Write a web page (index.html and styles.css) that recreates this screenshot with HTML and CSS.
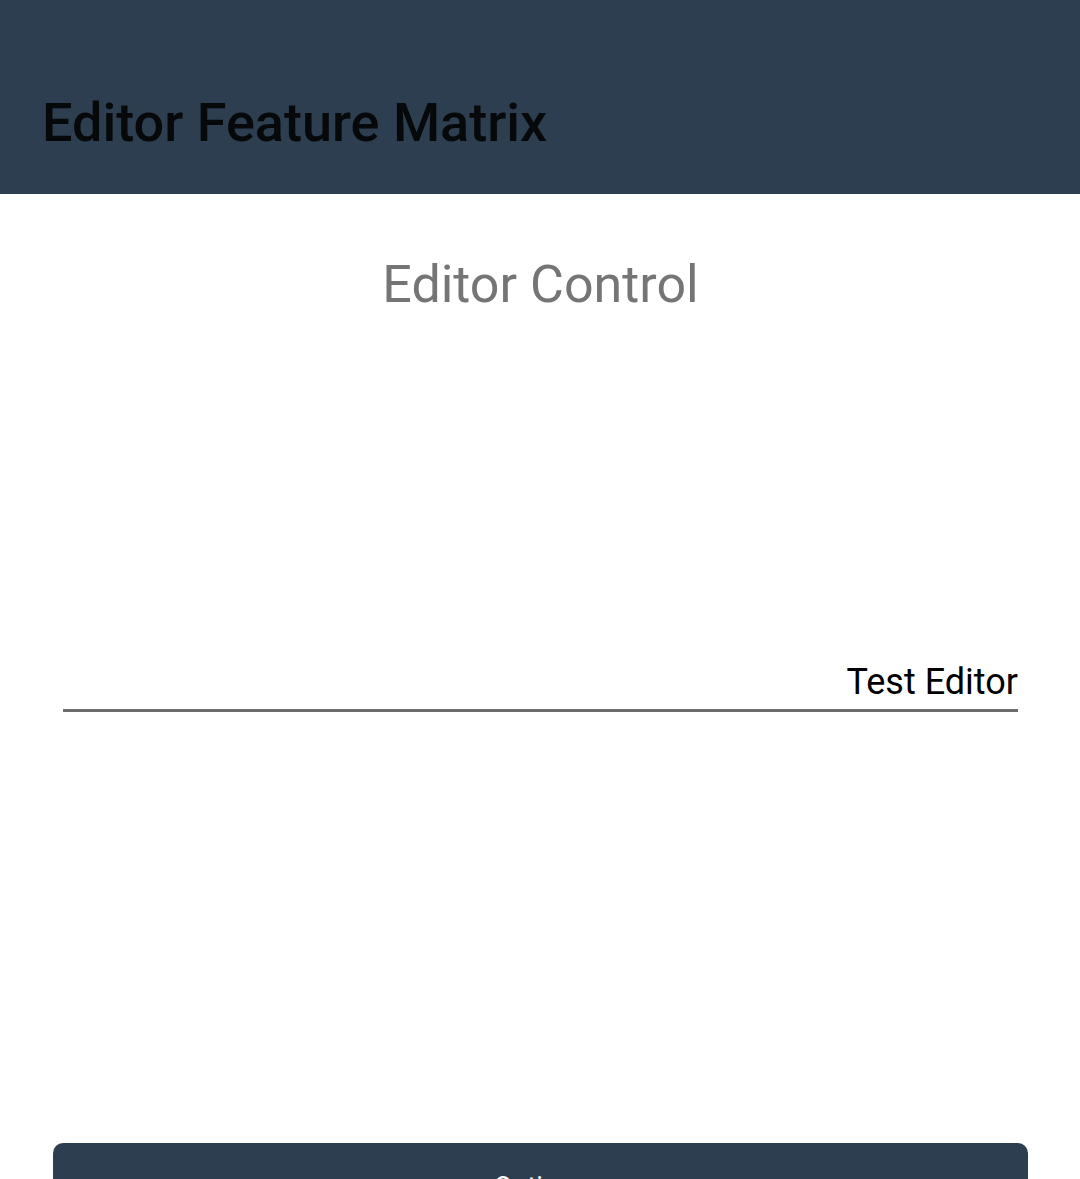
FILE: index.html
```html
<!DOCTYPE html>
<html lang="en">
<head>
<meta charset="utf-8">
<meta name="viewport" content="width=device-width, initial-scale=1">
<title>Editor Feature Matrix</title>
<link rel="stylesheet" href="styles.css">
</head>
<body class="page">
<header class="toolbar">
<h1 class="toolbar-title">Editor Feature Matrix</h1>
</header>
<main class="content">
<h2 class="heading" id="editor-label">Editor Control</h2>
<div class="editor-area">
<textarea class="editor" rows="1" aria-labelledby="editor-label" spellcheck="false">Test Editor</textarea>
</div>
<button class="options" type="button">Options</button>
</main>
</body>
</html>
```

FILE: styles.css
```css
* {
  box-sizing: border-box;
}

.page {
  display: flex;
  flex-direction: column;
  height: 100vh;
  margin: 0;
  overflow: hidden;
  background: #fff;
  font-family: Roboto, sans-serif;
}

.toolbar {
  flex: none;
  padding: 93px 42px 41px;
  background: #2d3e50;
}

.toolbar-title {
  margin: 0;
  color: #060809;
  font-size: 54px;
  font-weight: 500;
  line-height: 60px;
}

.content {
  flex: 1;
  display: flex;
  flex-direction: column;
  min-height: 0;
  padding: 61px 52px 0 53px;
}

.heading {
  flex: none;
  margin: 0;
  color: #757575;
  font-size: 52px;
  font-weight: 400;
  line-height: 60px;
  text-align: center;
}

.editor-area {
  flex: none;
  display: flex;
  align-items: center;
  height: 828px;
  padding: 0 10px 88px;
}

.editor {
  display: block;
  width: 100%;
  height: 54px;
  padding: 0;
  border: 0;
  border-bottom: 3px solid #6c6c6c;
  background: transparent;
  color: #000;
  font: 36px/48px Roboto, sans-serif;
  text-align: right;
  resize: none;
  overflow: hidden;
  outline: none;
}

.options {
  flex: none;
  height: 87px;
  padding: 0;
  border: 0;
  border-radius: 10px;
  background: #2d3e50;
  color: #fff;
  font: 27px/30px Roboto, sans-serif;
}
```
